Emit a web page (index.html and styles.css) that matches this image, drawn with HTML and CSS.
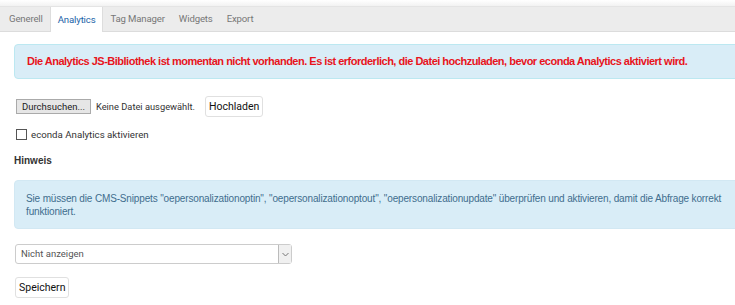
FILE: index.html
```html
<!DOCTYPE html>
<html lang="de">
<head>
<meta charset="utf-8">
<link rel="stylesheet" href="styles.css">
</head>
<body>
<div class="topshade"></div>
<nav class="tabs">
  <span class="tab">Generell</span>
  <span class="tab active">Analytics</span>
  <span class="tab">Tag Manager</span>
  <span class="tab">Widgets</span>
  <span class="tab">Export</span>
</nav>
<main class="content">
  <div class="alert alert-danger">Die Analytics JS-Bibliothek ist momentan nicht vorhanden. Es ist erforderlich, die Datei hochzuladen, bevor econda Analytics aktiviert wird.</div>
  <div class="upload-row">
    <span class="file-btn">Durchsuchen...</span>
    <span class="file-text">Keine Datei ausgewählt.</span>
    <button class="btn">Hochladen</button>
  </div>
  <label class="check-row"><span class="checkbox"></span>econda Analytics aktivieren</label>
  <h4 class="hint-title">Hinweis</h4>
  <div class="alert alert-info">Sie müssen die CMS-Snippets "oepersonalizationoptin", "oepersonalizationoptout", "oepersonalizationupdate" überprüfen und aktivieren, damit die Abfrage korrekt funktioniert.</div>
  <div class="select">
    <span class="select-text">Nicht anzeigen</span>
    <span class="select-arrow"><svg width="7" height="5" viewBox="0 0 7 5"><path d="M0.5 1 L3.5 4 L6.5 1" fill="none" stroke="#777" stroke-width="1"/></svg></span>
  </div>
  <button class="btn save">Speichern</button>
</main>
</body>
</html>
```
FILE: styles.css
```css
html, body { margin: 0; padding: 0; overflow: hidden; background: #fff; }
body { width: 735px; height: 305px; font-family: "Liberation Sans", Arial, sans-serif; font-size: 11px; color: #333; }
.topshade { height: 6px; background: linear-gradient(#fff, #f2f2f2); }
.tabs { display: flex; background: #ececec; border-top: 1px solid #e4e4e4; border-bottom: 1px solid #dcdcdc; padding-left: 2px; box-sizing: border-box; height: 26px; }
.tab { font-family: Roboto, sans-serif; font-size: 9.6px; letter-spacing: -0.15px; color: #777; padding: 0 7px; line-height: 24px; }
.active { background: #fff; color: #1a63a8; border-left: 1px solid #ddd; border-right: 1px solid #ddd; margin-bottom: -1px; line-height: 25px; }
.content { padding: 12px 0 0 14px; width: 740px; }
.alert { border-radius: 4px; box-sizing: border-box; }
.alert-danger { background: #d9edf7; border: 1px solid #bce8f1; color: #e8141c; font-weight: bold; font-size: 11px; letter-spacing: -0.5px; padding: 10px 12px 11px; height: 35px; line-height: 13px; }
.upload-row { display: flex; align-items: center; margin-top: 17px; padding-left: 2px; }
.file-btn { font-family: Roboto, sans-serif; font-size: 9.5px; color: #222; background: #e6e6e6; border: 1px solid #aaa; padding: 0 5px; height: 13px; line-height: 13px; }
.file-text { font-family: Roboto, sans-serif; font-size: 9.3px; color: #333; margin-left: 5px; }
.btn { font-family: Roboto, sans-serif; font-size: 10.5px; color: #111; background: #fff; border: 1px solid #e0e0e0; border-radius: 3px; height: 21px; padding: 0 3px; }
.upload-row .btn { margin-left: 10px; }
.check-row { display: flex; align-items: center; margin-top: 12px; padding-left: 2px; font-family: Roboto, sans-serif; font-size: 9.7px; color: #333; }
.checkbox { width: 9px; height: 9px; border: 1px solid #555; margin-right: 4px; }
.hint-title { margin: 15px 0 0; font-size: 10px; font-weight: bold; color: #333; }
.alert-info { width: 726px; margin-top: 14px; background: #d9edf7; border: 1px solid #d2e8f3; color: #3f6e8e; padding: 11px 11px 10px 11px; line-height: 13px; font-size: 10px; letter-spacing: -0.15px; height: 49px; }
.select { display: flex; width: 277px; height: 20px; box-sizing: border-box; border: 1px solid #ccc; border-radius: 3px; margin-top: 15px; margin-left: 1px; align-items: stretch; }
.select-text { flex: 1; font-family: Roboto, sans-serif; font-size: 9.5px; color: #555; padding-left: 5px; line-height: 18px; }
.select-arrow { width: 12px; border-left: 1px solid #bbb; background: #f0f0f0; display: flex; align-items: center; justify-content: center; }
.save { display: block; margin-top: 13px; margin-left: 1px; }
```
